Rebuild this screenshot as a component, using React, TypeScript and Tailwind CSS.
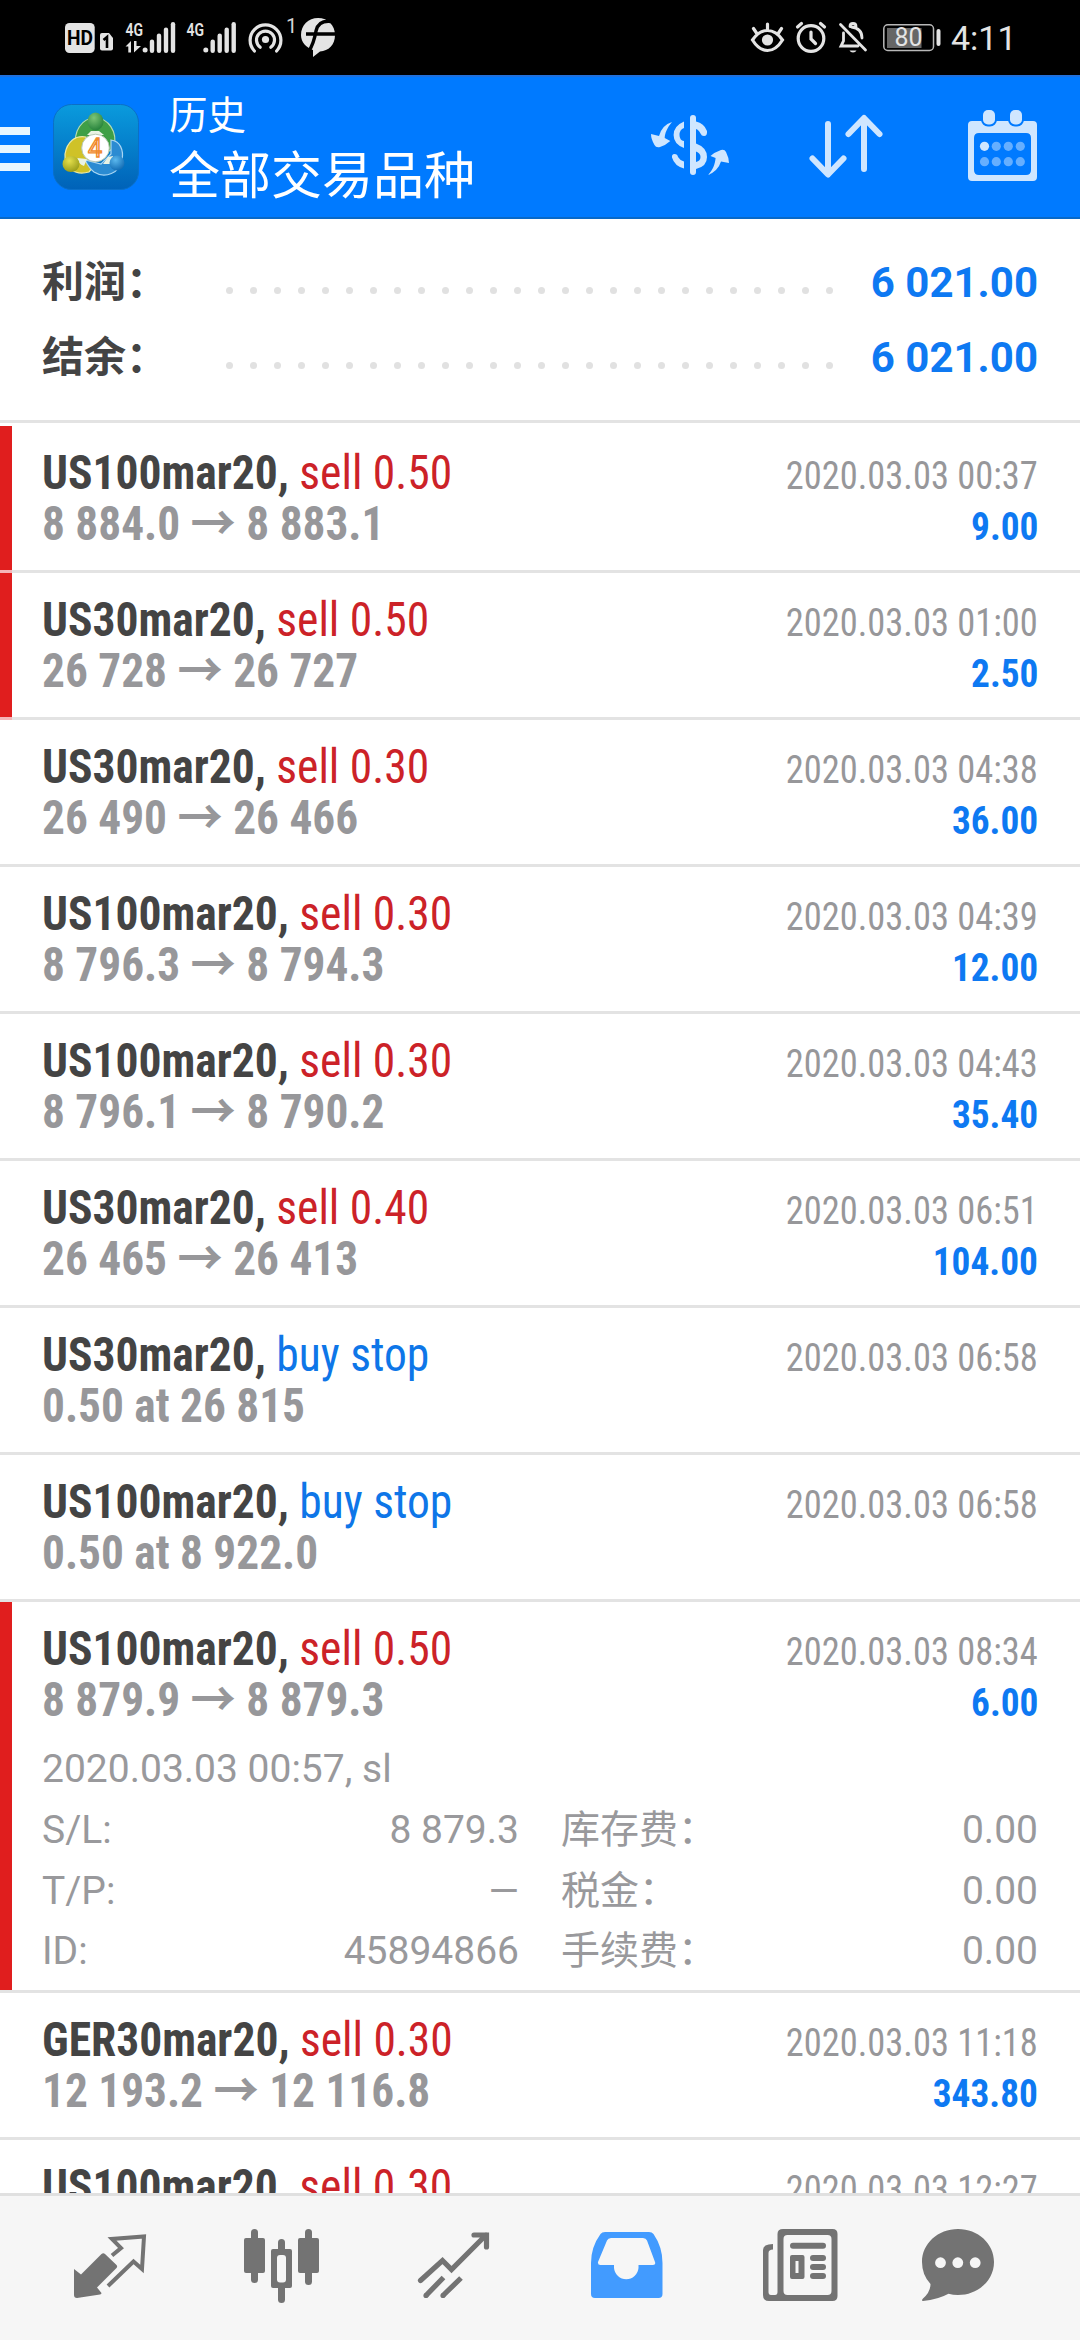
import { clsx } from "clsx";
import type { ReactNode } from "react";

type Deal = {
  symbol: string;
  side: "sell" | "buy";
  action: string;
  open: string;
  close?: string;
  time: string;
  profit?: string;
  flagged?: boolean;
  details?: {
    closedAt: string;
    rows: readonly (readonly [string, string, string, string])[];
  };
};

const SUMMARY = [
  { label: "利润：", value: "6 021.00" },
  { label: "结余：", value: "6 021.00" },
];

const DEALS: readonly Deal[] = [
  { symbol: "US100mar20", side: "sell", action: "sell 0.50", open: "8 884.0", close: "8 883.1", time: "2020.03.03 00:37", profit: "9.00", flagged: true },
  { symbol: "US30mar20", side: "sell", action: "sell 0.50", open: "26 728", close: "26 727", time: "2020.03.03 01:00", profit: "2.50", flagged: true },
  { symbol: "US30mar20", side: "sell", action: "sell 0.30", open: "26 490", close: "26 466", time: "2020.03.03 04:38", profit: "36.00" },
  { symbol: "US100mar20", side: "sell", action: "sell 0.30", open: "8 796.3", close: "8 794.3", time: "2020.03.03 04:39", profit: "12.00" },
  { symbol: "US100mar20", side: "sell", action: "sell 0.30", open: "8 796.1", close: "8 790.2", time: "2020.03.03 04:43", profit: "35.40" },
  { symbol: "US30mar20", side: "sell", action: "sell 0.40", open: "26 465", close: "26 413", time: "2020.03.03 06:51", profit: "104.00" },
  { symbol: "US30mar20", side: "buy", action: "buy stop", open: "0.50 at 26 815", time: "2020.03.03 06:58" },
  { symbol: "US100mar20", side: "buy", action: "buy stop", open: "0.50 at 8 922.0", time: "2020.03.03 06:58" },
  {
    symbol: "US100mar20",
    side: "sell",
    action: "sell 0.50",
    open: "8 879.9",
    close: "8 879.3",
    time: "2020.03.03 08:34",
    profit: "6.00",
    flagged: true,
    details: {
      closedAt: "2020.03.03 00:57, sl",
      rows: [
        ["S/L:", "8 879.3", "库存费：", "0.00"],
        ["T/P:", "—", "税金：", "0.00"],
        ["ID:", "45894866", "手续费：", "0.00"],
      ],
    },
  },
  { symbol: "GER30mar20", side: "sell", action: "sell 0.30", open: "12 193.2", close: "12 116.8", time: "2020.03.03 11:18", profit: "343.80" },
  { symbol: "US100mar20", side: "sell", action: "sell 0.30", open: "", time: "2020.03.03 12:27" },
];

const DOTS = Array.from({ length: 26 }, (_, i) => i);

/* Signal bars, drawn from x with the tallest bar on the right */
function Bars({ x }: { x: number }) {
  return (
    <g fill="#e4e4e4">
      <circle cx={x + 2.3} cy="50" r="2.5" />
      <rect x={x + 7} y="39.5" width="4.4" height="13.5" rx="2.2" />
      <rect x={x + 14} y="33.5" width="4.4" height="19.5" rx="2.2" />
      <rect x={x + 21} y="27.5" width="4.4" height="25.5" rx="2.2" />
      <rect x={x + 28} y="22" width="4.4" height="31" rx="2.2" />
    </g>
  );
}

function StatusBar() {
  return (
    <div className="flex h-[75px] items-start bg-black text-[#e4e4e4]">
      <svg viewBox="60 0 60 75" className="ml-[60px] h-[75px] w-[60px]">
        <rect x="65" y="23" width="29.7" height="30" rx="4.5" fill="#e4e4e4" />
        <text x="67" y="45" fontSize="20" fontWeight="700" textLength="26" lengthAdjust="spacingAndGlyphs">HD</text>
        <path d="M102 33H109L113 38V48.5Q113 50.5 111 50.5H102Q100 50.5 100 48.5V35Q100 33 102 33Z" fill="#e4e4e4" />
        <path d="M103.5 40L107 37V48" fill="none" stroke="#000" strokeWidth="2.6" />
      </svg>
      <svg viewBox="120 0 62 75" className="h-[75px] w-[62px]">
        <text x="125.5" y="36" fontSize="19" fontWeight="600" fill="#e4e4e4" textLength="17.5" lengthAdjust="spacingAndGlyphs">4G</text>
        <path d="M125.5 46.5L131 41V52.5H128.3V46.5ZM134 41H136.5V46H141L134 52.5Z" fill="#e4e4e4" />
        <Bars x={142.8} />
      </svg>
      <svg viewBox="182 0 60 75" className="h-[75px] w-[60px]">
        <text x="186.5" y="36" fontSize="19" fontWeight="600" fill="#e4e4e4" textLength="17.5" lengthAdjust="spacingAndGlyphs">4G</text>
        <Bars x={203.5} />
      </svg>
      <svg viewBox="242 0 56 75" className="h-[75px] w-[56px]">
        <circle cx="265.5" cy="39.5" r="3.6" fill="#e4e4e4" />
        <g fill="none" stroke="#e4e4e4" strokeWidth="3.2" strokeLinecap="round">
          <path d="M260.2 47.3A9 9 0 1 1 270.8 47.3" />
          <path d="M254.4 51A15.4 15.4 0 1 1 276.6 51" />
        </g>
        <text x="286" y="33" fontSize="20" fill="#d4d4d4">1</text>
      </svg>
      <svg viewBox="298 0 42 75" className="h-[75px] w-[42px]">
        <path d="M318 18C328 18 335 25.5 335 35C335 45 328.5 51 320 51.5L313 57V50C306 47.5 301 42 301 35C301 25 308.5 18 318 18Z" fill="#e4e4e4" />
        <path d="M331 21.5Q318.500 20 316 31Q314 43 308.500 52M306 34H336" fill="none" stroke="#000" strokeWidth="3.4" />
      </svg>
      <div className="flex-1" />
      <svg viewBox="745 0 45 75" className="h-[75px] w-[45px]" fill="none" stroke="#e4e4e4" strokeWidth="3.2" strokeLinecap="round">
        <path d="M752.5 40Q759 30.5 767.5 30.5T782.5 40Q776 50.5 767.5 50.5T752.5 40ZM767.5 24V29M753.5 28.5L756.5 33M781.5 28.5L778.5 33" />
        <circle cx="767.5" cy="40" r="5.6" fill="#e4e4e4" stroke="none" />
      </svg>
      <svg viewBox="790 0 42 75" className="h-[75px] w-[42px]" fill="none" stroke="#e4e4e4" strokeWidth="3.2" strokeLinecap="round">
        <circle cx="811" cy="38.5" r="12.8" />
        <path d="M811 32V39L815.5 43.5M797.5 27L801.5 23.5M824.5 27L820.5 23.5" />
      </svg>
      <svg viewBox="832 0 40 75" className="h-[75px] w-[40px]" fill="none" stroke="#e4e4e4" strokeWidth="2.8" strokeLinecap="round">
        <path d="M840.5 24.5L865.5 50M843.5 33V41L841 46H858M850 26.5Q850 23.5 853 23.5T856 26.5M851.5 27Q862 28.5 862 38" />
        <path d="M849.5 50.5H856.5Q855.5 52.5 853 52.5T849.5 50.5Z" fill="#e4e4e4" stroke="none" />
      </svg>
      <svg viewBox="872 0 78 75" className="h-[75px] w-[78px]">
        <rect x="883.8" y="24.8" width="49.7" height="25.7" rx="4" fill="none" stroke="#b8b8b8" strokeWidth="1.5" />
        <rect x="887" y="28" width="34.5" height="20" fill="#666" />
        <rect x="936.5" y="29" width="4" height="17" rx="2" fill="#e4e4e4" />
        <text x="894.5" y="46.3" fontSize="25.5" fill="#e4e4e4" textLength="28" lengthAdjust="spacingAndGlyphs">80</text>
      </svg>
      <span className="mr-[65px] h-[75px] w-[65px] pl-px text-[34px] leading-[77px]">4:11</span>
    </div>
  );
}

/* Three linked figures round the version number */
function AppLogo() {
  return (
    <svg viewBox="0 0 86 86" className="size-[86px]">
      <defs>
        <linearGradient id="tile" x1="0" y1="0" x2="0" y2="1">
          <stop offset="0" stopColor="#0a9bdd" />
          <stop offset="1" stopColor="#0062b8" />
        </linearGradient>
        <radialGradient id="green" cx="0.4" cy="0.3" r="0.8">
          <stop offset="0" stopColor="#7cc576" />
          <stop offset="1" stopColor="#1c7a34" />
        </radialGradient>
        <radialGradient id="yellow" cx="0.4" cy="0.3" r="0.8">
          <stop offset="0" stopColor="#e6e04c" />
          <stop offset="1" stopColor="#8f9414" />
        </radialGradient>
        <radialGradient id="blue" cx="0.4" cy="0.3" r="0.8">
          <stop offset="0" stopColor="#5bb8ee" />
          <stop offset="1" stopColor="#0a63ad" />
        </radialGradient>
      </defs>
      <rect x="0.5" y="0.5" width="85" height="85" rx="18" fill="url(#tile)" stroke="#0b6fc6" />
      <g strokeWidth="1.2">
        <path d="M23 43C20 27 29 14 42 14S65 27 61 44L53 49L30 47Z" fill="#3f9f46" stroke="#b5dcb0" />
        <path d="M33 33C22 31 14 38 12 50C11 64 22 72 36 68L41 62L32 50Z" fill="#cfc228" stroke="#efe9a0" />
        <path d="M58 36C67 37 71 46 69 56C67 69 52 75 41 68C37 65 34 60 32 56L48 60L58 50Z" fill="#2b8bd2" stroke="#a9d6f4" />
      </g>
      <path d="M24 54L34 55L31 62Q25 60 24 54ZM55 53L60 52L58 60L50 60ZM38 27H46L51 31H34Z" fill="#e9f3e4" />
      <ellipse cx="42.5" cy="17.5" rx="8" ry="9" fill="url(#green)" />
      <ellipse cx="18" cy="60" rx="8.5" ry="8" fill="url(#yellow)" />
      <ellipse cx="64" cy="59" rx="7.5" ry="7.5" fill="url(#blue)" />
      <circle cx="42.5" cy="44" r="13.8" fill="#fff" stroke="#b8c9b4" />
      <text x="42" y="53" fontSize="25" textAnchor="middle" fill="#fff4e4" stroke="#f08a2c" strokeWidth="1.4">4</text>
    </svg>
  );
}

function Header() {
  return (
    <header className="flex h-[144px] border-t-2 border-b-2 border-t-[#2070dc] border-b-[#0869c8] bg-[#007aff] text-white">
      <div className="flex w-[30px] flex-col gap-[10px] pt-[50px]">
        <span className="h-2 bg-[#e8f6ff]" />
        <span className="h-2 bg-[#e8f6ff]" />
        <span className="h-2 bg-[#e8f6ff]" />
      </div>
      <div className="ml-[23px] pt-[27px]">
        <AppLogo />
      </div>
      <div className="ml-[30px] flex-1 pt-[10px]">
        <p className="text-[38.5px] leading-[57px]">历史</p>
        <p className="text-[51px] leading-[66px]">全部交易品种</p>
      </div>
      <svg viewBox="612 77 156 140" className="h-[140px] w-[156px]" fill="#cfe6ff">
        <path d="M672 122C667 128 665 133 664.7 138L670.3 141Q666 145 660 147Q656 148 654.5 145Q651 139 651 134L659 136Q662 125 672 122Z" />
        <path d="M708 175C713 170 715 164 715.6 158L710.5 156Q715 152 721 150Q724.5 149 726 152Q729 158 729 163L721 161.5Q718 171 708 175Z" />
        <path d="M684 121.5V128Q679.5 129.5 679.5 135T684 141V148Q673.6 144 673.6 135T684 121.5Z" />
        <path d="M672 157.5Q671.5 154 674.5 154T678 157Q680 160.5 684 161.5V168.5Q674.5 166 672 157.5Z" />
        <path d="M696 121.5Q704 123 707 131Q707.5 136 704 136Q701.5 136 700.5 133.5Q698.5 129.5 696 129Z" />
        <path fillRule="evenodd" d="M696 143.5Q707 147.5 707 157T696 169ZM696 151.5V162Q700.5 161 700.5 157T696 151.5Z" />
        <rect x="690" y="115" width="6" height="60" rx="3" />
      </svg>
      <svg viewBox="768 77 156 140" className="h-[140px] w-[156px]" fill="none" stroke="#cfe6ff" strokeWidth="6" strokeLinecap="round" strokeLinejoin="round">
        <path d="M828 124V174M812.5 158.5L828 174.5L843.5 158.5" />
        <path d="M864 169V119M848.5 134L864 118L879.5 134" />
      </svg>
      <svg viewBox="924 77 156 140" className="h-[140px] w-[156px]" fill="#cfe6ff">
        <path fillRule="evenodd" d="M972 121H1033Q1037 121 1037 125V177Q1037 181 1033 181H972Q968 181 968 177V125Q968 121 972 121ZM979 133Q974 133 974 138V170Q974 175 979 175H1026Q1031 175 1031 170V138Q1031 133 1026 133Z" />
        <g stroke="#007aff" strokeWidth="4" paintOrder="stroke">
          <rect x="983" y="110" width="12" height="14.5" rx="5" />
          <rect x="1010" y="110" width="12" height="14.5" rx="5" />
        </g>
        <circle cx="984.5" cy="146.3" r="4.6" />
        <g fill="#66afff">
          <circle cx="996.3" cy="146.3" r="4.6" />
          <circle cx="1008.3" cy="146.3" r="4.6" />
          <circle cx="1020.3" cy="146.3" r="4.6" />
          <circle cx="984.5" cy="161.7" r="4.6" />
          <circle cx="996.3" cy="161.7" r="4.6" />
          <circle cx="1008.3" cy="161.7" r="4.6" />
          <circle cx="1020.3" cy="161.7" r="4.6" />
        </g>
      </svg>
    </header>
  );
}

function Summary() {
  return (
    <section className="h-[204px] border-b-[3px] border-[#e3e3e3] px-[42px] pt-[26px]">
      {SUMMARY.map(({ label, value }) => (
        <div key={label} className="flex h-[75px] items-center text-[42px] leading-[75px] font-bold">
          <span className="w-[184px] text-[#444]">{label}</span>
          <span className="flex gap-[17px] pt-[15px]">
            {DOTS.map((dot) => (
              <i key={dot} className="size-[7px] rounded-full bg-[#e1e1e1]" />
            ))}
          </span>
          <span className="flex-1 text-right text-[#0e79f2]">{value}</span>
        </div>
      ))}
    </section>
  );
}

function DealRow({ deal }: { deal: Deal }) {
  return (
    <li>
      <div
        className={clsx(
          "pr-[42px] pt-[21px] font-['Roboto_Condensed','Noto_Sans_CJK_SC',sans-serif]",
          deal.flagged ? "border-l-[12px] border-[#e01e1e] pl-[30px]" : "pl-[42px]",
          deal.details ? "h-[388px]" : "h-[144px]",
        )}
      >
        <div className="flex h-[51px] items-baseline justify-between leading-[51px]">
          <p className="origin-left scale-x-[0.948] text-[48px]">
            <span className="font-bold text-[#444]">{deal.symbol},</span>{" "}
            <span className={deal.side === "sell" ? "text-[#cc2228]" : "text-[#0e76e8]"}>{deal.action}</span>
          </p>
          <time className="origin-right scale-x-[0.934] text-[39px] text-[#97979a]">{deal.time}</time>
        </div>
        <div className="flex h-[51px] items-baseline justify-between leading-[51px] font-bold">
          <p className="origin-left scale-x-[0.944] text-[48px] text-[#97979a]">
            {deal.open}
            {deal.close && (
              <>
                {" "}
                <span className="font-['Noto_Sans_CJK_SC',sans-serif] leading-0">→</span> {deal.close}
              </>
            )}
          </p>
          <span className="origin-right scale-x-[0.957] text-[39px] text-[#0e79f2]">{deal.profit}</span>
        </div>
        {deal.details && (
          <div className="mt-[14px] font-['Roboto','Noto_Sans_CJK_SC',sans-serif] text-[39px] text-[#99999c]">
            <p className="h-[61px] leading-[61px]">{deal.details.closedAt}</p>
            {deal.details.rows.map(([label, value, feeLabel, fee]) => (
              <div key={label} className="grid h-[60.5px] grid-cols-2 gap-[42px] leading-[60.5px]">
                <p className="flex justify-between">
                  <span>{label}</span>
                  <span>{value}</span>
                </p>
                <p className="flex justify-between">
                  <span>{feeLabel}</span>
                  <span>{fee}</span>
                </p>
              </div>
            ))}
          </div>
        )}
      </div>
      <div className={clsx("h-[3px] bg-[#e3e3e3]", deal.flagged && !deal.details && "border-l-[12px] border-[#f5b5b8]")} />
    </li>
  );
}

/* Tab icons share one 144px tall strip, 172 units per tab */
function TabIcon({ x, active, children }: { x: number; active?: boolean; children: ReactNode }) {
  return (
    <svg
      viewBox={`${x} 0 172 144`}
      className={clsx("h-[144px] w-[172px]", active ? "text-[#429bff]" : "text-[#737373]")}
      fill="currentColor"
    >
      {children}
    </svg>
  );
}

function TabBar() {
  return (
    <nav className="flex h-[147px] border-t-[3px] border-[#e0e0e0] bg-[#f6f6f6] px-6">
      <TabIcon x={24}>
        <path d="M74 73L81 78.5L101.5 58Q103.3 56.5 105 58L116.5 69Q117.8 70.5 116.5 72L97 91.5L101.5 97Q101.5 98.2 100 98.5L77 102Q74 102 74 99Z" />
        <path d="M112 59.5L121 52L112 43L144 40.5L142 73L133.5 65.5L108 90" fill="none" stroke="currentColor" strokeWidth="4" />
      </TabIcon>
      <TabIcon x={196}>
        <rect x="251" y="33" width="7" height="54" rx="3.5" />
        <rect x="244" y="42" width="21" height="35" rx="2" />
        <rect x="305" y="33" width="7" height="56" rx="3.5" />
        <rect x="298" y="42" width="21" height="35" rx="2" />
        <rect x="278" y="43" width="7" height="64" rx="3.5" />
        <rect x="271" y="53" width="21" height="39" rx="2" />
        <rect x="277" y="59" width="9" height="27.5" rx="3" fill="#f6f6f6" />
      </TabIcon>
      <TabIcon x={368}>
        <path d="M420.5 84.5L442.5 64.5L451.5 73.5L486 39M474 39H486.5V51" fill="none" stroke="currentColor" strokeWidth="5.2" strokeLinecap="round" />
        <path d="M426 99.5L443.5 81.5M443 99.5L461 82" fill="none" stroke="currentColor" strokeWidth="5.2" />
        <circle cx="426" cy="99.5" r="2.6" />
        <circle cx="443" cy="99.5" r="2.6" />
      </TabIcon>
      <TabIcon x={540} active>
        <path
          fillRule="evenodd"
          d="M605 36H649Q652 36 653.5 38Q662.5 51 662.5 67V98Q662.5 102 658.5 102H595Q591 102 591 98V67Q591 51 600.5 38Q602 36 605 36ZM611 42Q608 42 607 44.5L598 66Q597.5 69 600.5 69H614V72A12.3 12.3 0 0 0 638.5 72V69H653Q656 69 655 66L647 44.5Q646 42 643 42Z"
        />
      </TabIcon>
      <TabIcon x={712}>
        <path fillRule="evenodd" d="M783 33H832.5Q837.5 33 837.5 38V100Q837.5 105 832.5 105H769Q763 105 763 99V54Q763 48 773 48V53.5Q768.5 53.5 768.5 57V96Q768.5 99 771 99H775Q777.5 99 777.5 96V38Q777.5 33 783 33ZM787.5 39Q783.5 39 783.5 43V95Q783.5 99 787.5 99H827.5Q831.5 99 831.5 95V43Q831.5 39 827.5 39Z" />
        <rect x="790" y="46.7" width="36" height="6" rx="3" />
        <path fillRule="evenodd" d="M792 59H802.5Q804.5 59 804.5 61V81Q804.5 83 802.5 83H792Q790 83 790 81V61Q790 59 792 59ZM795.5 65V77H798.5V65Z" />
        <rect x="810" y="59" width="16" height="6" rx="3" />
        <rect x="810" y="68" width="16" height="6" rx="3" />
        <rect x="810" y="77" width="16" height="6" rx="3" />
      </TabIcon>
      <TabIcon x={884}>
        <path d="M958 33C978 33 994 47.5 994 66S978 99 958 99Q953 99 948.5 97.7Q938 103.5 923 105Q921 104.5 923 102.5Q930.5 96 930.5 88Q922 79 922 66C922 47.5 938 33 958 33Z" />
        <g fill="#f6f6f6">
          <circle cx="940.5" cy="66.7" r="5.4" />
          <circle cx="957.8" cy="66.7" r="5.4" />
          <circle cx="975.2" cy="66.7" r="5.4" />
        </g>
      </TabIcon>
    </nav>
  );
}

export default function App() {
  return (
    <div className="flex h-[2340px] w-[1080px] flex-col overflow-hidden bg-white font-['Roboto','Noto_Sans_CJK_SC',sans-serif]">
      <StatusBar />
      <Header />
      <Summary />
      <ul className="min-h-0 flex-1 overflow-hidden pt-[3px]">
        {DEALS.map((deal) => (
          <DealRow key={`${deal.symbol}-${deal.time}`} deal={deal} />
        ))}
      </ul>
      <TabBar />
    </div>
  );
}
